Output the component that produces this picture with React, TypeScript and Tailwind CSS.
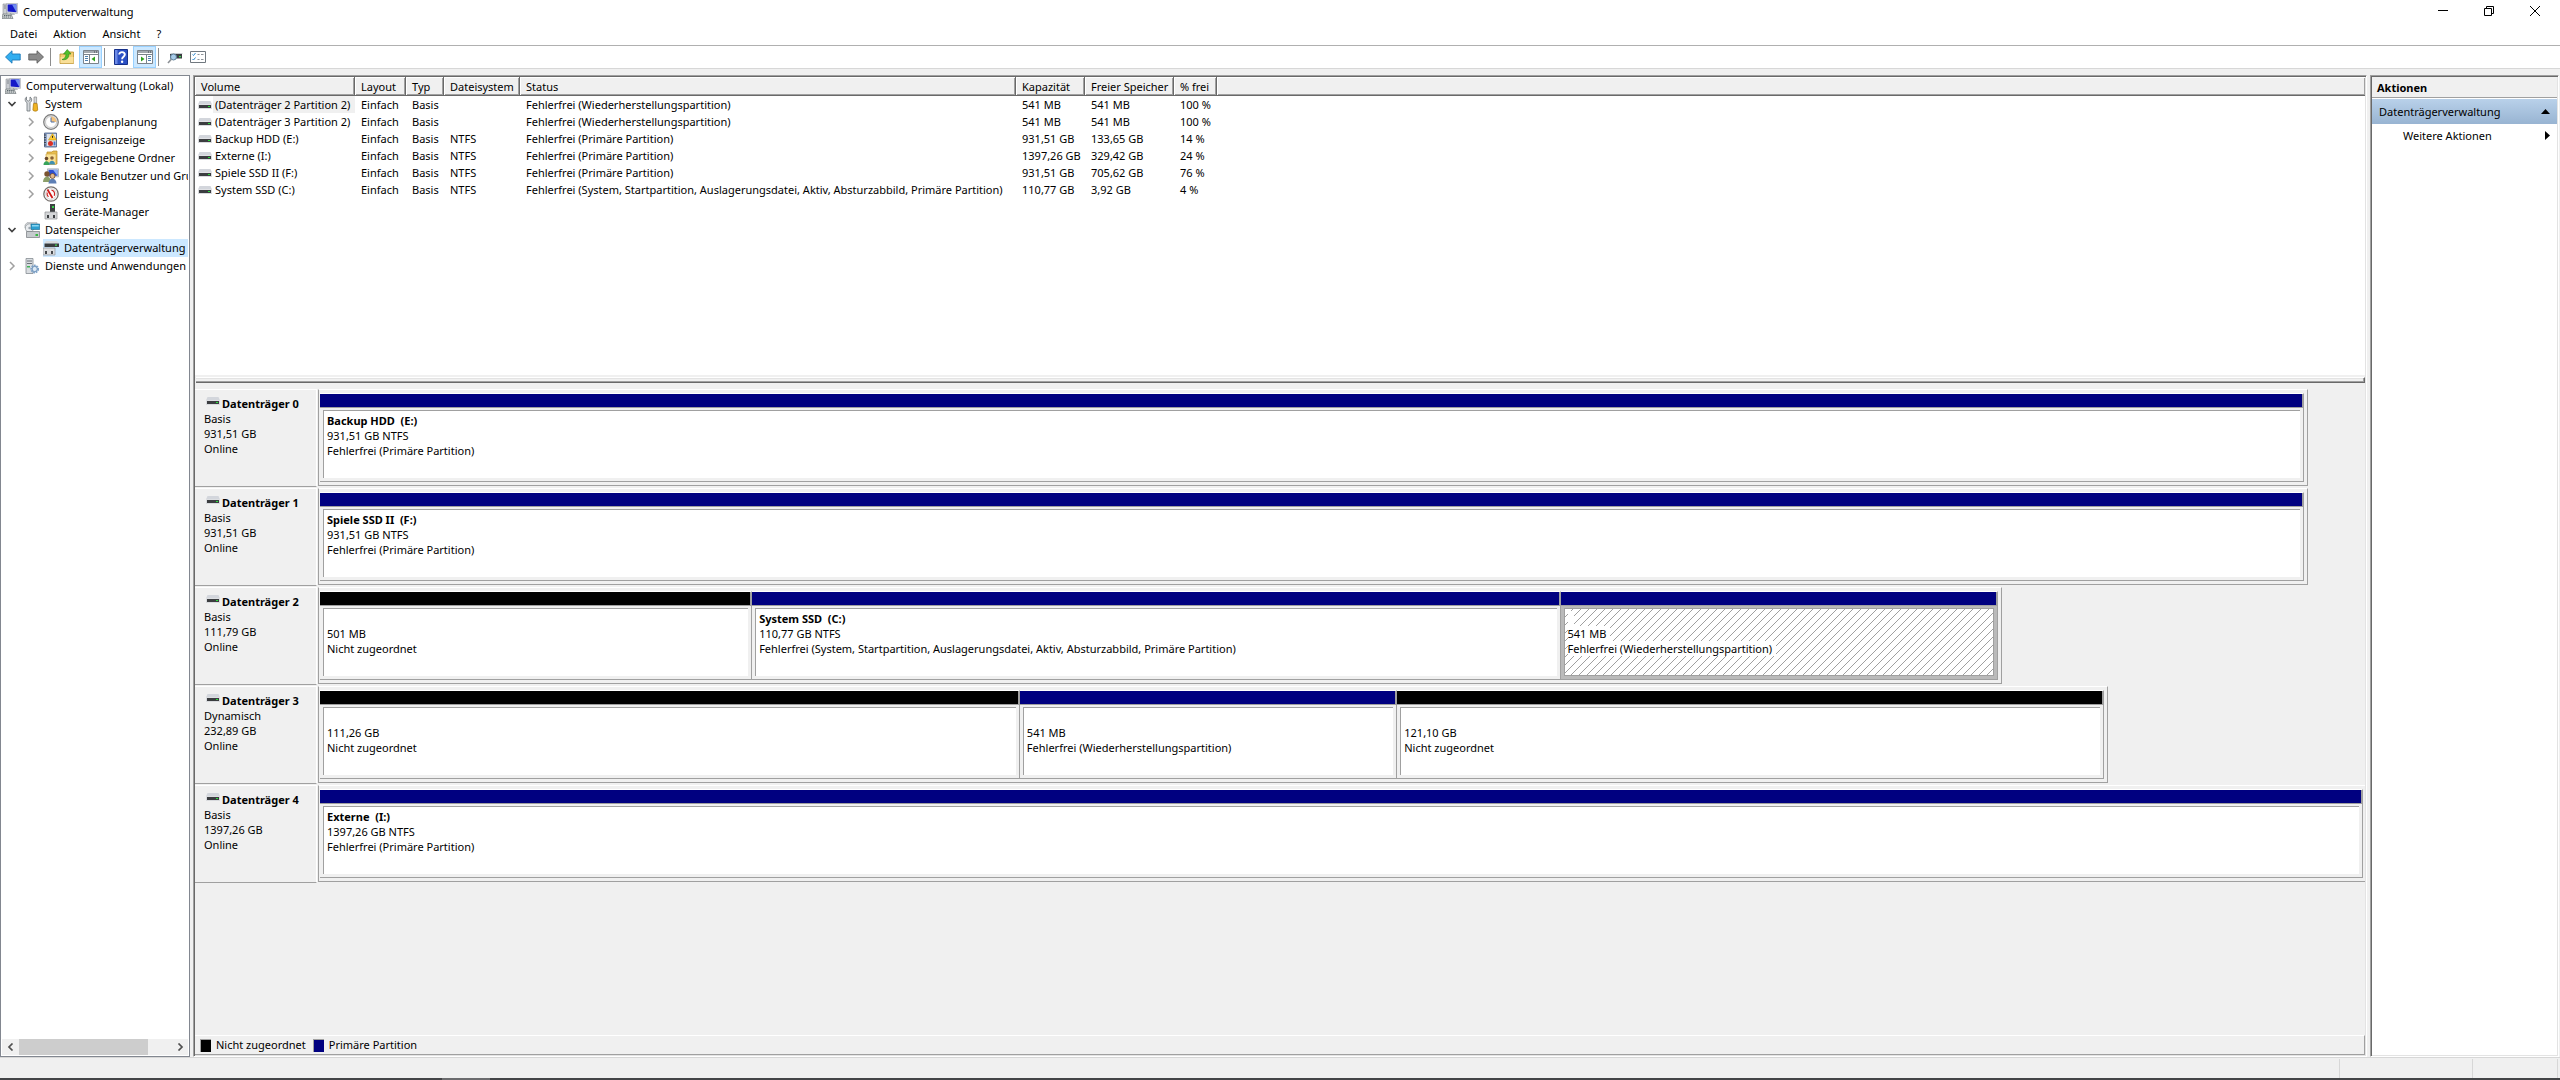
import type { ReactNode } from "react";

interface Volume {
  name: string;
  fs?: string;
  status: string;
  capacity: string;
  free: string;
  percent: string;
}

interface Partition {
  name?: string;
  size: string;
  status: string;
  weight: number;
  free?: boolean;
  selected?: boolean;
}

interface Disk {
  name: string;
  type: string;
  size: string;
  width: number; // percent of the graph area
  partitions: Partition[];
}

const volumes: Volume[] = [
  { name: "(Datenträger 2 Partition 2)", status: "Fehlerfrei (Wiederherstellungspartition)", capacity: "541 MB", free: "541 MB", percent: "100 %" },
  { name: "(Datenträger 3 Partition 2)", status: "Fehlerfrei (Wiederherstellungspartition)", capacity: "541 MB", free: "541 MB", percent: "100 %" },
  { name: "Backup HDD (E:)", fs: "NTFS", status: "Fehlerfrei (Primäre Partition)", capacity: "931,51 GB", free: "133,65 GB", percent: "14 %" },
  { name: "Externe (I:)", fs: "NTFS", status: "Fehlerfrei (Primäre Partition)", capacity: "1397,26 GB", free: "329,42 GB", percent: "24 %" },
  { name: "Spiele SSD II (F:)", fs: "NTFS", status: "Fehlerfrei (Primäre Partition)", capacity: "931,51 GB", free: "705,62 GB", percent: "76 %" },
  { name: "System SSD (C:)", fs: "NTFS", status: "Fehlerfrei (System, Startpartition, Auslagerungsdatei, Aktiv, Absturzabbild, Primäre Partition)", capacity: "110,77 GB", free: "3,92 GB", percent: "4 %" },
];

const disks: Disk[] = [
  {
    name: "Datenträger 0", type: "Basis", size: "931,51 GB", width: 97.2,
    partitions: [{ name: "Backup HDD  (E:)", size: "931,51 GB NTFS", status: "Fehlerfrei (Primäre Partition)", weight: 1 }],
  },
  {
    name: "Datenträger 1", type: "Basis", size: "931,51 GB", width: 97.2,
    partitions: [{ name: "Spiele SSD II  (F:)", size: "931,51 GB NTFS", status: "Fehlerfrei (Primäre Partition)", weight: 1 }],
  },
  {
    name: "Datenträger 2", type: "Basis", size: "111,79 GB", width: 82.25,
    partitions: [
      { size: "501 MB", status: "Nicht zugeordnet", weight: 432, free: true },
      { name: "System SSD  (C:)", size: "110,77 GB NTFS", status: "Fehlerfrei (System, Startpartition, Auslagerungsdatei, Aktiv, Absturzabbild, Primäre Partition)", weight: 809 },
      { size: "541 MB", status: "Fehlerfrei (Wiederherstellungspartition)", weight: 437, selected: true },
    ],
  },
  {
    name: "Datenträger 3", type: "Dynamisch", size: "232,89 GB", width: 87.45,
    partitions: [
      { size: "111,26 GB", status: "Nicht zugeordnet", weight: 700, free: true },
      { size: "541 MB", status: "Fehlerfrei (Wiederherstellungspartition)", weight: 377 },
      { size: "121,10 GB", status: "Nicht zugeordnet", weight: 707, free: true },
    ],
  },
  {
    name: "Datenträger 4", type: "Basis", size: "1397,26 GB", width: 100.1,
    partitions: [{ name: "Externe  (I:)", size: "1397,26 GB NTFS", status: "Fehlerfrei (Primäre Partition)", weight: 1 }],
  },
];

const Icon = ({ children }: { children: ReactNode }) => (
  <svg width="16" height="16" viewBox="0 0 16 16" className="shrink-0" aria-hidden="true">{children}</svg>
);

const ComputerIcon = () => (
  <Icon>
    <path d="M1 1h4v11H1z" fill="#c9ccd1" stroke="#8d9298" strokeWidth=".6" />
    <path d="M2 3h2M2 5h2" stroke="#6f757c" strokeWidth=".8" />
    <path d="M4.5.6 15.4.2v10.2l-10.9-.8z" fill="#e4e6e9" stroke="#9aa0a8" strokeWidth=".6" />
    <path d="M5.6 1.6 14.4 1.3v7.9l-8.8-.7z" fill="#1418c8" />
    <path d="M10 1.5 14.4 1.3v7.9z" fill="#6f8df0" />
    <path d="M8 10h4l1 2H8z" fill="#b9bdc3" />
    <path d="M1 11h8l2 4.6H0z" fill="#d5d8d8" stroke="#6b7275" strokeWidth=".7" />
    <path d="M2 12.5h7M1.5 14h8" stroke="#59656a" strokeWidth="1" strokeDasharray="1.4 .7" />
  </Icon>
);

const ToolsIcon = () => (
  <Icon>
    <path d="M2.500 1v3l1.700 1.200L6 4V1c1.600.8 2.200 2.700 1.400 4.200L6 6.700V15H3V6.700C.8 5.500.6 2.200 2.500 1z" fill="#d6d9dc" stroke="#6d7378" strokeWidth=".8" />
    <path d="M10 1h2.600v6H10z" fill="#d5d8db" stroke="#777" strokeWidth=".6" />
    <path d="M9.500 7.500h3.600l.6 6.500c0 1.500-4.800 1.500-4.800 0z" fill="#f0b323" stroke="#a87406" strokeWidth=".7" />
  </Icon>
);

const ClockIcon = () => (
  <Icon>
    <circle cx="8" cy="8" r="7.300" fill="#e4e4e4" stroke="#7b7b7b" strokeWidth="1.200" />
    <circle cx="8" cy="8" r="5.500" fill="#fff" stroke="#b0b0b0" strokeWidth=".6" />
    <path d="M8 8V2.500A5.500 5.500 0 0 1 13.500 8z" fill="#f4c27c" />
    <path d="M8 3.500V8h3.500" fill="none" stroke="#4a6ea8" strokeWidth="1" />
  </Icon>
);

const EventIcon = () => (
  <Icon>
    <path d="M1.500 1h12v14h-12z" fill="#8fa5c9" stroke="#4b5f86" strokeWidth=".8" />
    <path d="M4 2h9v12H4z" fill="#dfe3ea" />
    <path d="M1 3h2M1 5.500h2M1 8h2M1 10.500h2M1 13h2" stroke="#333" strokeWidth=".8" />
    <path d="M9.500 1.500 13.500 8h-8z" fill="#fc3" stroke="#b88a00" strokeWidth=".5" />
    <path d="M9.500 3.800v2" stroke="#222" strokeWidth="1" />
    <circle cx="7.500" cy="11.500" r="2.500" fill="#d93025" />
    <path d="M10.500 9.500h2v4h-2z" fill="#4a73c9" />
  </Icon>
);

const SharedIcon = () => (
  <Icon>
    <path d="M4 2h5l1-1h4v13H4z" fill="#e8bf52" stroke="#b88b22" strokeWidth=".7" />
    <path d="M3 4h10v10.500H3z" fill="#fae196" stroke="#caa03a" strokeWidth=".6" />
    <circle cx="3.500" cy="8.500" r="1.800" fill="#6b4a2b" />
    <path d="M.5 15c0-5 6-5 6 0z" fill="#37a35a" />
    <circle cx="9" cy="8" r="1.800" fill="#8a6238" />
    <path d="M6 14.500c0-5 6-5 6 0z" fill="#3f8fb0" />
  </Icon>
);

const UsersIcon = () => (
  <Icon>
    <path d="M4.500.8h11v8h-11z" fill="#dfe2e6" stroke="#8f959c" strokeWidth=".6" />
    <path d="M5.500 1.800h9v6h-9z" fill="#2d4fd0" />
    <path d="m10 1.800 4.500 0v6z" fill="#8fb0f5" />
    <circle cx="4" cy="6" r="2.700" fill="#7b5431" />
    <path d="M0 14c0-7 8-7 8 0z" fill="#8c9f6a" />
    <circle cx="9.500" cy="8" r="2.500" fill="#e2b98c" stroke="#6b4524" strokeWidth=".8" />
    <path d="M5.500 15.500c0-6.500 8-6.500 8 0z" fill="#5e7fb5" />
  </Icon>
);

const GaugeIcon = () => (
  <Icon>
    <circle cx="8" cy="8" r="7.200" fill="#fff" stroke="#77716e" strokeWidth="1.300" />
    <circle cx="8" cy="8" r="5.400" fill="#fdfdfd" stroke="#aaa" strokeWidth=".5" />
    <path d="m4.500 3.500 5 8.500" stroke="#d01818" strokeWidth="1.800" />
    <path d="M8.500 4.200c2.500.4 3.700 2.800 2.800 5.600M4.200 6.500c-.4 1.500 0 3 1.200 4.300" fill="none" stroke="#c22" strokeWidth="1.200" />
  </Icon>
);

const DeviceIcon = () => (
  <Icon>
    <path d="M7 0h5v8H7z" fill="#3d4042" />
    <path d="M9 2h2v2H9z" fill="#37d24a" />
    <path d="M2 8h12v7H2z" fill="#d4d6d8" stroke="#8f9396" strokeWidth=".7" />
    <path d="M4 11h2v3H4zM10 11h2v3h-2z" fill="#3b3e41" />
  </Icon>
);

const StorageIcon = () => (
  <Icon>
    <path d="M1 3 3 .7h10V6H1z" fill="#d9dcdf" stroke="#8f9498" strokeWidth=".6" />
    <circle cx="5.500" cy="6" r="4.200" fill="#e9ecef" stroke="#8a9095" strokeWidth=".7" />
    <circle cx="5.500" cy="6" r="1.200" fill="#9aa5ad" />
    <path d="M7 2h8.700v5.500H7z" fill="#2d9fd0" stroke="#17678c" strokeWidth=".6" />
    <path d="M8 3h6.700v1.500H8z" fill="#8ad6f2" />
    <path d="M2.500 9.500h13v6h-13z" fill="#c6cacd" stroke="#74797d" strokeWidth=".7" />
    <path d="M11.500 12h2.500v2h-2.500z" fill="#35b83f" />
  </Icon>
);

const DiskMgmtIcon = () => (
  <Icon>
    <path d="M3 1h11l2 2.500H1.500z" fill="#d7dadd" />
    <path d="M1.500 3.500H16V7H1.500z" fill="#3a3d40" />
    <path d="M12 4.500h2v1.200h-2z" fill="#42d956" />
    <path d="M0 8h12v7H0z" fill="#dcdee0" stroke="#909498" strokeWidth=".7" />
    <path d="M2 11h2v3H2zM8 11h2v3H8z" fill="#45484b" />
  </Icon>
);

const ServicesIcon = () => (
  <Icon>
    <path d="M2 .5h7v15H2z" fill="#d9dde1" stroke="#878d93" strokeWidth=".8" />
    <path d="M3 3h5M3 5.500h5" stroke="#6d737a" strokeWidth="1" />
    <path d="M3 8h3v1.500H3z" fill="#3fb254" />
    <circle cx="10.700" cy="11" r="3.300" fill="none" stroke="#7fa3c9" strokeWidth="2.200" strokeDasharray="1.700 .7" />
    <circle cx="10.700" cy="11" r="2.600" fill="#dce9f5" stroke="#6f94bb" strokeWidth="1" />
  </Icon>
);

const DriveIcon = () => (
  <svg width="14" height="8" viewBox="0 0 14 8" className="shrink-0" aria-hidden="true">
    <path d="M1.500 0h11L14 3.500H0z" fill="#d3d6dc" />
    <path d="M0 3.500h14V8H0z" fill="#d9dbde" />
    <path d="M1 4h12v3H1z" fill="#3b3d40" />
    <path d="M10 5h2v1h-2z" fill="#29e03a" />
  </svg>
);

const ArrowIcon = ({ forward }: { forward?: boolean }) => (
  <Icon>
    {forward ? (
      <path d="M15.500 8 9 1.800V5H.8v6H9v3.200z" fill="#8c8c8c" stroke="#5e5e5e" strokeWidth=".9" />
    ) : (
      <path d="M.5 8 7 1.800V5h8.200v6H7v3.200z" fill="#31aef0" stroke="#1c78b8" strokeWidth=".9" />
    )}
  </Icon>
);

const FolderUpIcon = () => (
  <Icon>
    <path d="M1 5h5l1-2h7.500v11.500H1z" fill="#f3cf72" stroke="#b98e2c" strokeWidth=".8" />
    <path d="M1.500 8h13v6.200h-13z" fill="#f9df98" />
    <path d="M3 10.500C6.500 9.500 7 7 6.800 5H4.500L8.300.5 12 5H9.800c.3 4-2.300 6.500-6.800 5.500z" fill="#4fbf2c" stroke="#2c8414" strokeWidth=".6" />
  </Icon>
);

const PaneIcon = ({ right }: { right?: boolean }) => (
  <Icon>
    <path d="M.5 1.500h15v13H.5z" fill="#fff" stroke="#7b838b" strokeWidth="1" />
    <path d="M1 3h14" stroke="#a3a9af" strokeWidth="2" />
    <path d="M11 3h1M13 3h1" stroke="#3c444c" strokeWidth="1" />
    <path d="M1 5.500h14" stroke="#7b838b" strokeWidth="1" />
    {right ? (
      <>
        <path d="M9.500 6v8" stroke="#7b838b" strokeWidth="1" />
        <path d="M11 7.500h3M11 9.500h3M11 11.500h3" stroke="#4d7fae" strokeWidth="1" />
        <path d="M4 7.500v5L7.500 10z" fill="#2fa11e" />
      </>
    ) : (
      <>
        <path d="M6.500 6v8" stroke="#7b838b" strokeWidth="1" />
        <path d="M2 7.500h3M2 9.500h3M2 11.500h3" stroke="#4d7fae" strokeWidth="1" />
        <path d="M12 7.500v5L8.500 10z" fill="#2fa11e" />
      </>
    )}
  </Icon>
);

const HelpIcon = () => (
  <Icon>
    <path d="M1.500.5h13v15h-13z" fill="#2b50c4" stroke="#16308a" strokeWidth="1" />
    <path d="M2 1h2.500v14H2z" fill="#6c8ae6" />
    <path d="M6.200 5.600c0-3.400 5.600-3.200 5.600 0 0 2.200-2.700 2.200-2.700 4.600" fill="none" stroke="#fff" strokeWidth="1.900" />
    <circle cx="9.100" cy="12.700" r="1.200" fill="#fff" />
  </Icon>
);

const DriveSearchIcon = () => (
  <Icon>
    <path d="M4 4h11l1 1H3z" fill="#c9cdd1" />
    <path d="M3 5h12v4.500H3z" fill="#3a3d40" />
    <path d="M12 7h2v1.200h-2z" fill="#3ddc50" />
    <circle cx="6.500" cy="8" r="3" fill="#a9cdea" stroke="#5f7f9a" strokeWidth="1" />
    <path d="M4.300 10.300 1 14" stroke="#8a8f94" strokeWidth="1.600" />
  </Icon>
);

const ListIcon = () => (
  <Icon>
    <path d="M.5 2.500h15v11H.5z" fill="#fff" stroke="#70787f" strokeWidth="1" />
    <path d="m2.500 5.500 1 1L5.500 4M2.500 10l1 1 2-2.500" fill="none" stroke="#2d8ad0" strokeWidth="1" />
    <path d="M7.500 5.500h2M11 5.500h2.500M7.500 10.500h2M11 10.500h2.500" stroke="#8d9399" strokeWidth="1" />
  </Icon>
);

const Chevron = ({ open }: { open?: boolean }) => (
  <svg width="10" height="10" viewBox="0 0 10 10" className="shrink-0" aria-hidden="true">
    {open ? (
      <path d="M1.500 3 5 6.500 8.500 3" fill="none" stroke="#404040" strokeWidth="1.700" />
    ) : (
      <path d="M3 1 7 5 3 9" fill="none" stroke="#a0a0a0" strokeWidth="1.500" />
    )}
  </svg>
);

interface TreeRowProps {
  icon: ReactNode;
  label: string;
  level: number;
  state?: "open" | "closed";
  selected?: boolean;
}

const indents = ["pl-[3px]", "pl-[5px]", "pl-6"];

const TreeRow = ({ icon, label, level, state, selected }: TreeRowProps) => (
  <li className={`flex h-[18px] items-center ${indents[level]}`}>
    {level > 0 && <span className="flex w-[17px] shrink-0">{state && <Chevron open={state === "open"} />}</span>}
    <button type="button" className={`flex h-full min-w-0 flex-1 items-center gap-[5px] whitespace-nowrap ${selected ? "bg-[#cce8ff]" : ""}`}>
      {icon}
      <span className="pb-[2px]">{label}</span>
    </button>
  </li>
);

const Pane = ({ className, children }: { className: string; children: ReactNode }) => (
  <div className={`border border-t-[#a0a0a0] border-r-white border-b-white border-l-[#a0a0a0] p-px shadow-[inset_1px_1px_0_#696969,inset_-1px_-1px_0_#e3e3e3] ${className}`}>
    {children}
  </div>
);

const columns = ["Volume", "Layout", "Typ", "Dateisystem", "Status", "Kapazität", "Freier Speicher", "% frei", ""];

const VolumeTable = () => (
  <table className="w-full table-fixed border-separate border-spacing-0 text-left whitespace-nowrap">
    <colgroup>
      <col className="w-[160px]" />
      <col className="w-[51px]" />
      <col className="w-[38px]" />
      <col className="w-[76px]" />
      <col className="w-[496px]" />
      <col className="w-[69px]" />
      <col className="w-[89px]" />
      <col className="w-[43px]" />
      <col />
    </colgroup>
    <thead>
      <tr>
        {columns.map((c) => (
          <th key={c} className="h-[19px] border-r border-b border-[#696969] bg-[#f0f0f0] py-0 pr-0 pl-1.5 font-normal shadow-[inset_1px_1px_0_#fff,inset_-1px_-1px_0_#a0a0a0] last:border-r-0">
            {c}
          </th>
        ))}
      </tr>
    </thead>
    <tbody>
      {volumes.map((v, i) => (
        <tr key={v.name}>
          <td className="h-[17px] p-0 pl-[3px]">
            <div className="flex items-center gap-px">
              <DriveIcon />
              <span className={`flex-1 pl-[2px] ${i === 0 ? "bg-[#f0f0f0]" : ""}`}>{v.name}</span>
            </div>
          </td>
          <td className="px-1.5 py-0">Einfach</td>
          <td className="px-1.5 py-0">Basis</td>
          <td className="px-1.5 py-0">{v.fs}</td>
          <td className="px-1.5 py-0">{v.status}</td>
          <td className="px-1.5 py-0">{v.capacity}</td>
          <td className="px-1.5 py-0">{v.free}</td>
          <td className="px-1.5 py-0">{v.percent}</td>
          <td className="p-0"></td>
        </tr>
      ))}
    </tbody>
  </table>
);

const PartitionBox = ({ part }: { part: Partition }) => {
  const line = part.selected ? "w-fit bg-white pr-1" : "";
  return (
    <div
      className="flex min-w-0 basis-0 flex-col border-t border-r border-b border-t-white border-r-[#a0a0a0] border-b-[#a0a0a0]"
      style={{ flexGrow: part.weight }}
    >
      <div className={`h-[13px] shrink-0 border-r border-[#a0a0a0] ${part.free ? "bg-black" : "bg-[#000080]"}`} />
      <div className={`flex min-h-0 flex-1 border-t border-[#a0a0a0] p-[3px] pt-[2px] ${part.selected ? "bg-[#bababa]" : ""}`}>
        <div
          className={`min-w-0 flex-1 overflow-hidden border-t border-l border-[#a0a0a0] pt-[2px] pl-[3px] leading-[15px] whitespace-pre ${
            part.selected
              ? "border-r border-b bg-[linear-gradient(135deg,white_46%,#a0a0a0_46%,#a0a0a0_54%,white_54%)] bg-[length:8px_8px]"
              : "bg-white"
          }`}
        >
          <p className={`font-bold ${line}`}>{part.name ?? " "}</p>
          <p className={line}>{part.size}</p>
          <p className={line}>{part.status}</p>
        </div>
      </div>
    </div>
  );
};

const DiskRow = ({ disk }: { disk: Disk }) => (
  <section className="mb-px flex h-[98px] shrink-0">
    <div className="mr-px w-[122px] shrink-0 border-t border-r border-b border-t-white border-r-white border-b-[#a0a0a0] pt-1.5 pl-[9px] leading-[15px]">
      <h2 className="flex gap-[2px] pl-[2px] font-bold">
        <span className="pt-px"><DriveIcon /></span>
        {disk.name}
      </h2>
      <p>{disk.type}</p>
      <p>{disk.size}</p>
      <p>Online</p>
    </div>
    <div className="min-w-0 flex-1">
      <div
        className="flex h-[97px] border border-t-white border-r-[#a0a0a0] border-b-[#a0a0a0] border-l-[#a0a0a0] py-[3px] pr-[3px] pl-px"
        style={{ width: `${disk.width}%` }}
      >
        {disk.partitions.map((p) => (
          <PartitionBox key={p.size} part={p} />
        ))}
      </div>
    </div>
  </section>
);

export default function App() {
  return (
    <div className="flex h-screen flex-col overflow-hidden bg-[#f0f0f0] font-['Noto_Sans',sans-serif] text-[11px] leading-[17px] text-black">
      <header className="flex h-6 shrink-0 items-center bg-white pr-[2px] pb-[2px] pl-[2px]">
        <ComputerIcon />
        <h1 className="flex-1 pl-[5px]">Computerverwaltung</h1>
        <button type="button" aria-label="Minimieren" className="flex h-full w-[46px] items-center justify-center">
          <svg width="10" height="10" viewBox="0 0 10 10"><path d="M0 4.500h10" stroke="#000" /></svg>
        </button>
        <button type="button" aria-label="Verkleinern" className="flex h-full w-[46px] items-center justify-center">
          <svg width="10" height="10" viewBox="0 0 10 10"><path d="M.5 2.500h7v7h-7zM2.500 2.500v-2h7v7h-2" fill="none" stroke="#000" /></svg>
        </button>
        <button type="button" aria-label="Schließen" className="flex h-full w-[46px] items-center justify-center">
          <svg width="10" height="10" viewBox="0 0 10 10"><path d="m0 0 10 10M10 0 0 10" stroke="#000" /></svg>
        </button>
      </header>

      <nav className="flex h-[22px] shrink-0 items-center gap-4 border-b border-[#b0b0b0] bg-white pb-[2px] pl-2.5">
        <button type="button">Datei</button>
        <button type="button">Aktion</button>
        <button type="button">Ansicht</button>
        <button type="button">?</button>
      </nav>

      <div className="flex h-[23px] shrink-0 items-center border-b border-[#d7d7d7] bg-white pl-[5px]">
        <button type="button" aria-label="Zurück"><ArrowIcon /></button>
        <button type="button" aria-label="Vorwärts" className="ml-[7px]"><ArrowIcon forward /></button>
        <span className="ml-1.5 h-[18px] w-px bg-[#8d8d8d]" />
        <button type="button" aria-label="Eine Ebene nach oben" className="ml-2"><FolderUpIcon /></button>
        <button type="button" aria-label="Konsolenstruktur" className="ml-1 flex h-full w-[23px] items-center justify-center border border-[#99d1ff] bg-[#cce8ff]">
          <PaneIcon />
        </button>
        <span className="ml-[2px] h-[18px] w-px bg-[#8d8d8d]" />
        <button type="button" aria-label="Hilfe" className="ml-2"><HelpIcon /></button>
        <button type="button" aria-label="Aktionsbereich" className="ml-1 flex h-full w-[23px] items-center justify-center border border-[#99d1ff] bg-[#cce8ff]">
          <PaneIcon right />
        </button>
        <span className="ml-[2px] h-[18px] w-px bg-[#8d8d8d]" />
        <button type="button" aria-label="Erneut prüfen" className="ml-2"><DriveSearchIcon /></button>
        <button type="button" aria-label="Einstellungen" className="ml-[7px]"><ListIcon /></button>
      </div>

      <main className="flex min-h-0 flex-1 gap-[3px] pt-1.5 pr-px">
        <aside className="flex w-[190px] shrink-0 flex-col border border-[#828790] bg-white p-px">
          <ul className="min-h-0 flex-1 overflow-hidden">
            <TreeRow level={0} icon={<ComputerIcon />} label="Computerverwaltung (Lokal)" />
            <TreeRow level={1} state="open" icon={<ToolsIcon />} label="System" />
            <TreeRow level={2} state="closed" icon={<ClockIcon />} label="Aufgabenplanung" />
            <TreeRow level={2} state="closed" icon={<EventIcon />} label="Ereignisanzeige" />
            <TreeRow level={2} state="closed" icon={<SharedIcon />} label="Freigegebene Ordner" />
            <TreeRow level={2} state="closed" icon={<UsersIcon />} label="Lokale Benutzer und Gruppen" />
            <TreeRow level={2} state="closed" icon={<GaugeIcon />} label="Leistung" />
            <TreeRow level={2} icon={<DeviceIcon />} label="Geräte-Manager" />
            <TreeRow level={1} state="open" icon={<StorageIcon />} label="Datenspeicher" />
            <TreeRow level={2} icon={<DiskMgmtIcon />} label="Datenträgerverwaltung" selected />
            <TreeRow level={1} state="closed" icon={<ServicesIcon />} label="Dienste und Anwendungen" />
          </ul>
          <div className="flex h-4 shrink-0 bg-[#f0f0f0]">
            <button type="button" aria-label="Nach links" className="flex w-[17px] items-center justify-center">
              <svg width="8" height="8" viewBox="0 0 8 8"><path d="M5.500.5 2 4l3.500 3.500" fill="none" stroke="#505050" strokeWidth="1.700" /></svg>
            </button>
            <div className="flex-1"><div className="h-full w-[85%] bg-[#cdcdcd]" /></div>
            <button type="button" aria-label="Nach rechts" className="flex w-[17px] items-center justify-center">
              <svg width="8" height="8" viewBox="0 0 8 8"><path d="M2.500.5 6 4 2.500 7.500" fill="none" stroke="#505050" strokeWidth="1.700" /></svg>
            </button>
          </div>
        </aside>

        <Pane className="flex min-w-0 flex-1 flex-col">
          <div className="h-[298px] shrink-0 overflow-hidden bg-white">
            <VolumeTable />
          </div>
          <div className="mt-[2px] ml-px h-1.5 shrink-0 border-t border-r border-b border-t-white border-r-[#696969] border-b-[#696969] shadow-[inset_-1px_-1px_0_#a0a0a0,inset_0_1px_0_#e3e3e3]" />
          <div className="flex min-h-0 flex-1 flex-col overflow-hidden pt-1.5">
            {disks.map((d) => (
              <DiskRow key={d.name} disk={d} />
            ))}
          </div>
          <footer className="flex h-5 shrink-0 items-center border-t border-r border-b border-t-white border-r-[#a0a0a0] border-b-[#a0a0a0] pl-[5px]">
            <span className="h-[13px] w-[11px] border-t border-l border-[#a0a0a0] bg-black" />
            <span className="pb-[2px] pl-[5px]">Nicht zugeordnet</span>
            <span className="ml-[7px] h-[13px] w-[11px] border-t border-l border-[#a0a0a0] bg-[#000080]" />
            <span className="pb-[2px] pl-[5px]">Primäre Partition</span>
          </footer>
        </Pane>

        <Pane className="flex w-[189px] shrink-0 flex-col bg-white">
          <h2 className="h-[21px] border-b border-[#a0a0a0] bg-[#f0f0f0] pl-[5px] leading-[21px] font-bold">Aktionen</h2>
          <button type="button" className="mt-px flex h-[25px] items-center justify-between bg-linear-to-b from-[#b9d1ea] to-[#98b4d2] px-[7px] pb-px">
            Datenträgerverwaltung
            <svg width="9" height="5" viewBox="0 0 9 5"><path d="M0 5 4.500 0 9 5z" /></svg>
          </button>
          <button type="button" className="flex h-6 items-center justify-between pr-[7px] pb-px pl-[31px]">
            Weitere Aktionen
            <svg width="5" height="9" viewBox="0 0 5 9"><path d="m0 0 5 4.500L0 9z" /></svg>
          </button>
        </Pane>
      </main>

      <div className="flex h-[21px] shrink-0 border-t border-[#d7d7d7] pt-px">
        <div className="flex-1 border-r border-[#d7d7d7]" />
        <div className="w-[133px] border-r border-[#d7d7d7]" />
        <div className="mr-[2px] w-[85px] border-r border-[#d7d7d7]" />
      </div>
      <div className="h-[2px] shrink-0 bg-[#444547] pl-[442px]">
        <div className="h-full w-12 bg-[#6b6c6e]" />
      </div>
    </div>
  );
}
